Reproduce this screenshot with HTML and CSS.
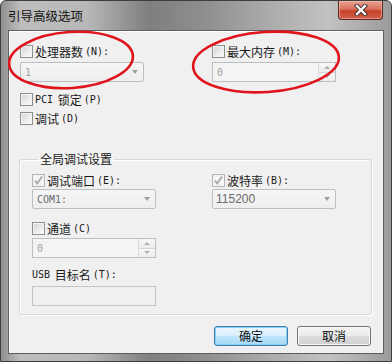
FILE: index.html
```html
<!DOCTYPE html>
<html lang="zh-CN">
<head>
    <meta charset="UTF-8">
    <title>引导高级选项</title>
    <link rel="stylesheet" href="styles.css">
</head>
<body>
    <div class="window">
        <div class="titlebar">
            <span class="title">引导高级选项</span>
            <span class="close">
                <svg width="14" height="12" viewBox="0 0 14 12">
                    <path d="M3 2 L11 10 M11 2 L3 10" stroke="#3a2a28" stroke-width="4.2" stroke-linecap="square"/>
                    <path d="M3 2 L11 10 M11 2 L3 10" stroke="#ffffff" stroke-width="2.4" stroke-linecap="square"/>
                </svg>
            </span>
        </div>

        <div class="client">
            <div class="top">
                <div class="col">
                    <label class="check"><span class="box"></span>处理器数<span class="en">(N):</span></label>
                    <div class="field combo"><span class="value en light">1</span><span class="arrow"></span></div>
                    <label class="check pci"><span class="box"></span><span class="en">PCI</span>&nbsp;锁定<span class="en">(P)</span></label>
                    <label class="check debug"><span class="box"></span>调试<span class="en">(D)</span></label>
                </div>
                <div class="col">
                    <label class="check"><span class="box"></span>最大内存<span class="en">(M):</span></label>
                    <div class="field spin">
                        <span class="value en light">0</span>
                        <span class="spin-btns"><span class="up"></span><span class="down"></span></span>
                    </div>
                </div>
            </div>

            <fieldset class="group">
                <legend>全局调试设置</legend>
                <div class="group-grid">
                    <div class="col">
                        <label class="check"><span class="box checked">
                            <svg width="11" height="11" viewBox="0 0 11 11"><path d="M2 5.5 L4.3 8.5 L9 1.5" fill="none" stroke="#a8a8a8" stroke-width="1.8"/></svg>
                        </span>调试端口<span class="en">(E):</span></label>
                        <div class="field combo tight"><span class="value en">COM1:</span><span class="arrow"></span></div>
                        <label class="check channel"><span class="box"></span>通道<span class="en">(C)</span></label>
                        <div class="field spin near">
                            <span class="value en light">0</span>
                            <span class="spin-btns"><span class="up"></span><span class="down"></span></span>
                        </div>
                        <div class="label usb"><span class="en">USB</span>&nbsp;目标名<span class="en">(T):</span></div>
                        <div class="field text"></div>
                    </div>
                    <div class="col">
                        <label class="check"><span class="box checked">
                            <svg width="11" height="11" viewBox="0 0 11 11"><path d="M2 5.5 L4.3 8.5 L9 1.5" fill="none" stroke="#a8a8a8" stroke-width="1.8"/></svg>
                        </span>波特率<span class="en">(B):</span></label>
                        <div class="field combo tight"><span class="value num">115200</span><span class="arrow"></span></div>
                    </div>
                </div>
            </fieldset>

            <div class="buttons">
                <button class="btn default">确定</button>
                <button class="btn">取消</button>
            </div>
        </div>

        <!-- red marks drawn over the dialog -->
        <svg class="marks" width="392" height="362" viewBox="0 0 392 362">
            <ellipse cx="71" cy="60" rx="62" ry="28" transform="rotate(-4 71 60)" fill="none" stroke="#e0141c" stroke-width="2.6"/>
            <ellipse cx="266" cy="62" rx="73" ry="30" transform="rotate(-4 266 62)" fill="none" stroke="#e0141c" stroke-width="2.6"/>
        </svg>
    </div>
</body>
</html>
```

FILE: styles.css
```css
body {
    margin: 0;
    padding: 0;
    background-color: #ffffff;
    font-family: "Noto Sans CJK SC", sans-serif;
    font-size: 12px;
    color: #1a1a1a;
}
.window {
    position: relative;
    width: 392px;
    height: 362px;
    box-sizing: border-box;
    padding: 0 7px 9px 7px;
    background: linear-gradient(90deg, #8f8f8f 0%, #bdbdbd 5%, #b8b8b8 22%, #7f7f7f 38%, #8e8e8e 52%, #aaaaaa 68%, #c2c2c2 84%, #9a9a9a 100%);
    border: 1px solid #3e3e3e;
    border-radius: 6px 6px 0 0;
}
.titlebar {
    display: flex;
    align-items: flex-start;
    height: 29px;
}
.title {
    line-height: 30px;
    font-size: 12.5px;
    color: #111;
}
.close {
    margin-left: auto;
    margin-right: 1px;
    width: 45px;
    height: 19px;
    box-sizing: border-box;
    display: flex;
    align-items: center;
    justify-content: center;
    border: 1px solid #5a2a22;
    border-top: none;
    border-radius: 0 0 4px 4px;
    background: linear-gradient(180deg, #e8a192 0%, #d7735f 45%, #c7412a 55%, #d2614b 100%);
    box-shadow: inset 0 0 0 1px rgba(255, 200, 190, 0.5);
}
.client {
    position: relative;
    height: 324px;
    box-sizing: border-box;
    padding: 13px 11px 0 10px;
    background-color: #f0f0f0;
    border: 1px solid #5e5e5e;
    box-shadow: inset 1px 1px 0 #ffffff;
}
.top {
    display: grid;
    grid-template-columns: 192px 1fr;
    padding-left: 1px;
}
.col {
    display: flex;
    flex-direction: column;
    align-items: flex-start;
}
.check, .label {
    display: flex;
    align-items: center;
    gap: 2px;
    height: 15px;
    line-height: 15px;
    white-space: nowrap;
}
.en {
    font-family: "DejaVu Sans Mono", monospace;
    font-size: 10px;
}
.box {
    width: 13px;
    height: 13px;
    box-sizing: border-box;
    display: flex;
    align-items: center;
    justify-content: center;
    border: 1px solid #8e8f8f;
    background: linear-gradient(135deg, #cfd2d6 0%, #f2f2f2 70%, #fbfbfb 100%);
    box-shadow: inset 0 0 0 1px #f4f4f4;
}
.box.checked {
    border-color: #b4b4b4;
    background: #f4f4f4;
}
.pci {
    margin-top: 10px;
}
.debug {
    margin-top: 4px;
}
.field {
    position: relative;
    width: 124px;
    height: 20px;
    margin-top: 3px;
    box-sizing: border-box;
    display: flex;
    align-items: center;
    border: 1px solid #bcbfc2;
    background-color: #f4f4f4;
}
.combo {
    border-radius: 2px;
    background: linear-gradient(180deg, #f6f6f6 0%, #eeeeee 100%);
}
.field.tight {
    margin-top: 1px;
}
.field.near {
    margin-top: 2px;
}
.value {
    padding-left: 4px;
    color: #6b6b6b;
}
.value.light {
    color: #a3a3a3;
}
.value.num {
    font-family: "Liberation Sans", sans-serif;
    font-size: 12px;
    padding-left: 3px;
}
.arrow {
    margin-left: auto;
    margin-right: 5px;
    width: 0;
    height: 0;
    border-left: 3.5px solid transparent;
    border-right: 3.5px solid transparent;
    border-top: 4px solid #a0a0a0;
}
.spin-btns {
    margin-left: auto;
    width: 16px;
    height: 18px;
    display: flex;
    flex-direction: column;
    border-left: 1px solid #dcdcdc;
}
.spin-btns span {
    flex: 1;
    position: relative;
    background: linear-gradient(180deg, #f7f7f7, #ececec);
}
.spin-btns .up {
    border-bottom: 1px solid #d6d6d6;
}
.spin-btns .up::after, .spin-btns .down::after {
    content: "";
    position: absolute;
    left: 5px;
    top: 3px;
    border-left: 3px solid transparent;
    border-right: 3px solid transparent;
}
.spin-btns .up::after {
    border-bottom: 3px solid #b0b0b0;
}
.spin-btns .down::after {
    top: 2px;
    border-top: 3px solid #b0b0b0;
}
.group {
    margin: 26px 0 0 0;
    padding: 7px 0 8px 12px;
    border: 1px solid #d5d9dc;
    border-radius: 3px;
    box-shadow: inset 1px 1px 0 #ffffff, 1px 1px 0 #ffffff;
    min-width: 0;
}
.group legend {
    margin-left: 6px;
    padding: 0 2px;
    line-height: 14px;
    font-size: 12px;
    color: #1a1a1a;
}
.group-grid {
    display: grid;
    grid-template-columns: 180px 1fr;
}
.channel {
    margin-top: 12px;
}
.usb {
    margin-top: 9px;
}
.field.text {
    margin-top: 4px;
    background-color: #f0f0f0;
    border-color: #c2c4c6;
}
.buttons {
    display: flex;
    justify-content: flex-end;
    gap: 9px;
    margin-top: 11px;
    padding-right: 1px;
}
.btn {
    width: 74px;
    height: 20px;
    padding: 0;
    font-family: "Noto Sans CJK SC", sans-serif;
    font-size: 12px;
    line-height: 18px;
    color: #111;
    border: 1px solid #707070;
    border-radius: 3px;
    background: linear-gradient(180deg, #f4f4f4 0%, #ebebeb 48%, #dddddd 52%, #cfcfcf 100%);
    box-shadow: inset 0 0 0 1px #fcfcfc;
}
.btn.default {
    border-color: #3c7fb1;
    background: linear-gradient(180deg, #eaf6fd 0%, #d9f0fc 48%, #bee6fd 52%, #a7d9f5 100%);
    box-shadow: inset 0 0 0 1px #8ad0f5;
}
.marks {
    position: absolute;
    left: -1px;
    top: -1px;
    pointer-events: none;
}
```
